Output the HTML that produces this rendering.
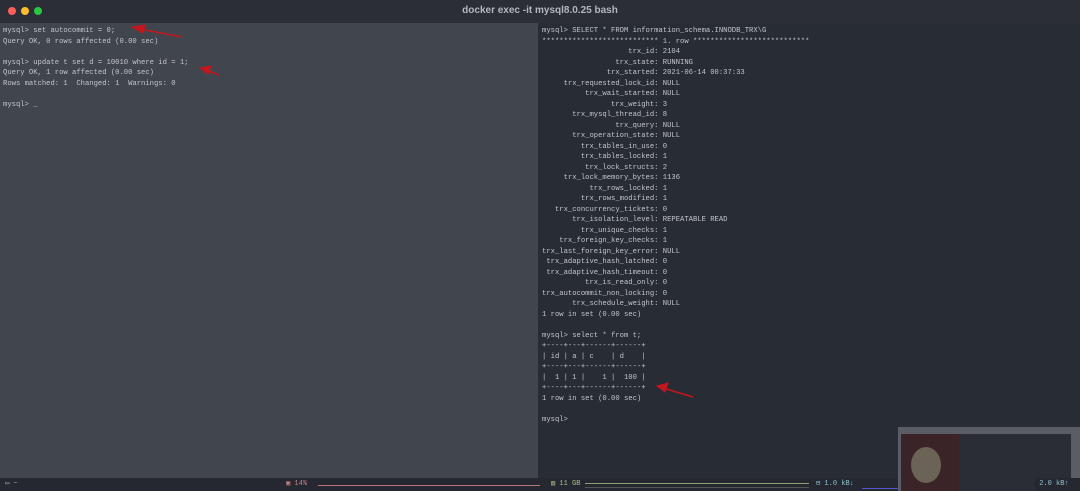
<!DOCTYPE html><html><head><style>
body{margin:0;width:1080px;height:491px;overflow:hidden;background:#282c34;font-family:"Liberation Sans",sans-serif}
.tb{position:absolute;left:0;top:0;width:1080px;height:23px;background:#2b2e36;}
.tb .t{position:absolute;width:100%;text-align:center;top:5px;font-size:10px;font-weight:bold;color:#b4b6bb}
.d{position:absolute;top:7px;width:8px;height:8px;border-radius:50%}
.l{position:absolute;left:0;top:23px;width:538px;height:455px;background:#41454e}
.r{position:absolute;left:540px;top:23px;width:540px;height:455px;background:#282c34}
pre{margin:0;position:absolute;font-family:"Liberation Mono",monospace;font-size:7.2px;line-height:10.5px;color:#c3c6cc}
.sb{position:absolute;left:0;top:478px;width:1080px;height:13px;background:#252830;font-family:"Liberation Mono",monospace;font-size:7px;line-height:13px}
</style></head><body>
<div class="tb"><div class="t">docker exec -it mysql8.0.25 bash</div>
<div class="d" style="left:8px;background:#fe5f57"></div><div class="d" style="left:21px;background:#febc2e"></div><div class="d" style="left:34px;background:#28c840"></div></div>
<div class="l"><pre style="left:3px;top:3px">mysql&gt; set autocommit = 0;
Query OK, 0 rows affected (0.00 sec)

mysql&gt; update t set d = 10010 where id = 1;
Query OK, 1 row affected (0.00 sec)
Rows matched: 1  Changed: 1  Warnings: 0

mysql&gt; _</pre></div>
<div class="r"><pre style="left:2px;top:3px">mysql&gt; SELECT * FROM information_schema.INNODB_TRX\G
*************************** 1. row ***************************
                    trx_id: 2104
                 trx_state: RUNNING
               trx_started: 2021-06-14 00:37:33
     trx_requested_lock_id: NULL
          trx_wait_started: NULL
                trx_weight: 3
       trx_mysql_thread_id: 8
                 trx_query: NULL
       trx_operation_state: NULL
         trx_tables_in_use: 0
         trx_tables_locked: 1
          trx_lock_structs: 2
     trx_lock_memory_bytes: 1136
           trx_rows_locked: 1
         trx_rows_modified: 1
   trx_concurrency_tickets: 0
       trx_isolation_level: REPEATABLE READ
         trx_unique_checks: 1
    trx_foreign_key_checks: 1
trx_last_foreign_key_error: NULL
 trx_adaptive_hash_latched: 0
 trx_adaptive_hash_timeout: 0
          trx_is_read_only: 0
trx_autocommit_non_locking: 0
       trx_schedule_weight: NULL
1 row in set (0.00 sec)

mysql&gt; select * from t;
+----+---+------+------+
| id | a | c    | d    |
+----+---+------+------+
|  1 | 1 |    1 |  100 |
+----+---+------+------+
1 row in set (0.00 sec)

mysql&gt;</pre></div>
<div class="sb"><span style="position:absolute;left:5px;color:#9aa">▭ ~</span>
<span style="position:absolute;left:286px;color:#c7838a">▣ 14%</span>
<div style="position:absolute;left:318px;top:7px;width:222px;height:1px;background:#b5737b"></div>
<span style="position:absolute;left:551px;color:#a8c383">▥ 11 GB</span>
<div style="position:absolute;left:585px;top:5px;width:224px;height:1px;background:#8a9f6e"></div>
<div style="position:absolute;left:585px;top:9px;width:224px;height:1px;background:#555"></div>
<span style="position:absolute;left:816px;color:#8fc3cf">⊟ 1.0 kB↓</span>
<div style="position:absolute;left:862px;top:10px;width:170px;height:1px;background:#5555cc"></div>
<span style="position:absolute;left:1039px;color:#8fc3cf">2.0 kB↑</span></div>
<div style="position:absolute;left:898px;top:427px;width:182px;height:64px;background:#5a5d66"></div>
<div style="position:absolute;left:901px;top:434px;width:170px;height:57px;background:#2a2d35"></div>
<div style="position:absolute;left:901px;top:434px;width:58px;height:57px;background:#3a2428"></div>
<div style="position:absolute;left:911px;top:447px;width:30px;height:36px;border-radius:50%;background:#6b6356"></div>
<div style="position:absolute;left:1035px;top:478px;width:45px;height:13px;background:#252830;font-family:'Liberation Mono',monospace;font-size:7px;line-height:13px;color:#8fc3cf">&nbsp;2.0 kB↑</div>
<svg width="1080" height="491" style="position:absolute;left:0;top:0" fill="#c4161c" stroke="#c4161c">
<line x1="182" y1="37" x2="140" y2="29" stroke-width="1.5"/><polygon points="132,27 145,25 143,33"/>
<line x1="219" y1="75" x2="206" y2="70" stroke-width="1.5"/><polygon points="200,68 211,66 208,74"/>
<line x1="693" y1="397" x2="663" y2="388" stroke-width="1.5"/><polygon points="657,386 668,383 665,392"/>
</svg>
</body></html>
